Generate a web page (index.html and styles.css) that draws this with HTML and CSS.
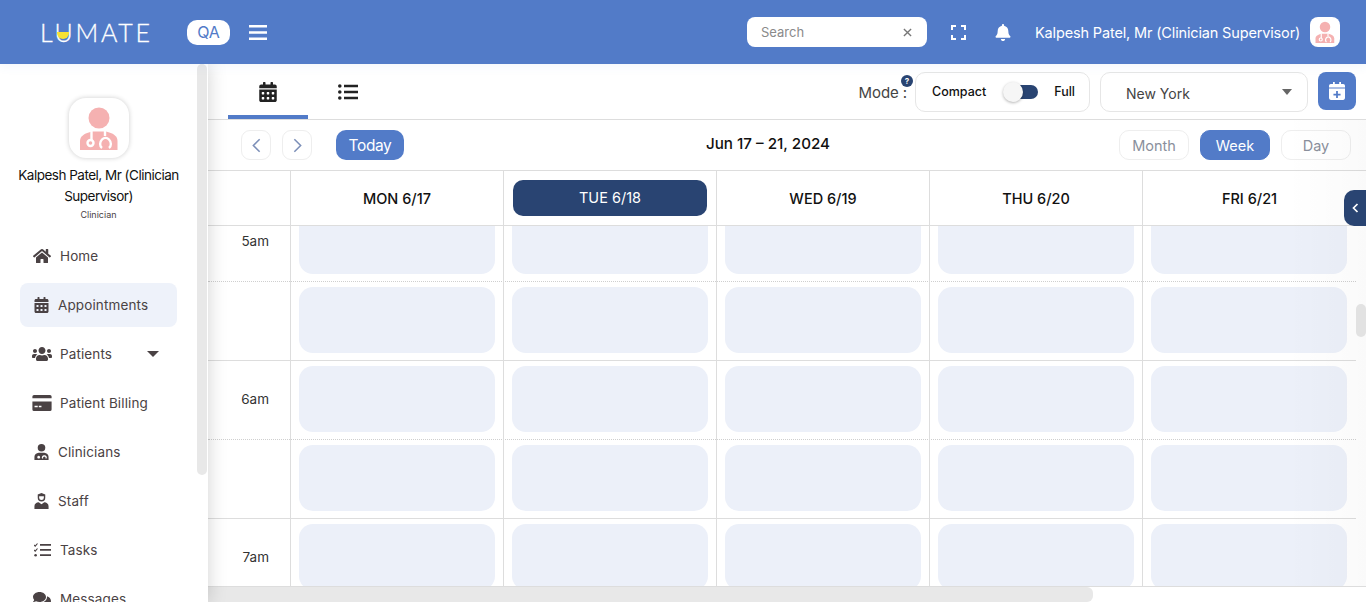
FILE: index.html
```html
<!DOCTYPE html>
<html lang="en">
<head>
<meta charset="utf-8">
<title>Lumate Appointments</title>
<link rel="stylesheet" href="styles.css">
</head>
<body>
<svg class="defs" width="0" height="0" aria-hidden="true">
  <symbol id="doctor" viewBox="0 0 60 60">
    <circle cx="30" cy="20" r="10.5" fill="#f5b1b1"/>
    <path d="M11 52V43c0-5 5-8 12-9.500h14c7 1.500 11.500 4.500 11.500 9.500v9z" fill="#f5b1b1"/>
    <g fill="none" stroke="#fff" stroke-width="2.400">
      <path d="M22.500 33v9"/><circle cx="21.500" cy="45" r="3"/>
      <path d="M36 33v5"/><path d="M33 50c-2.500-2-2.500-6 0-8.500 2-2 5-2 7 0 2.500 2.500 2.500 6.500 0 8.500"/>
    </g>
  </symbol>
  <symbol id="cal" viewBox="0 0 448 512">
    <path d="M0 464c0 26.500 21.500 48 48 48h352c26.500 0 48-21.500 48-48V192H0v272zm320-196c0-6.600 5.400-12 12-12h40c6.600 0 12 5.400 12 12v40c0 6.600-5.400 12-12 12h-40c-6.600 0-12-5.400-12-12v-40zm0 128c0-6.600 5.400-12 12-12h40c6.600 0 12 5.400 12 12v40c0 6.600-5.400 12-12 12h-40c-6.600 0-12-5.400-12-12v-40zM192 268c0-6.600 5.400-12 12-12h40c6.600 0 12 5.400 12 12v40c0 6.600-5.400 12-12 12h-40c-6.600 0-12-5.400-12-12v-40zm0 128c0-6.600 5.400-12 12-12h40c6.600 0 12 5.400 12 12v40c0 6.600-5.400 12-12 12h-40c-6.600 0-12-5.400-12-12v-40zM64 268c0-6.600 5.400-12 12-12h40c6.600 0 12 5.400 12 12v40c0 6.600-5.400 12-12 12H76c-6.600 0-12-5.400-12-12v-40zm0 128c0-6.600 5.400-12 12-12h40c6.600 0 12 5.400 12 12v40c0 6.600-5.400 12-12 12H76c-6.600 0-12-5.400-12-12v-40zM400 64h-48V16c0-8.800-7.200-16-16-16h-32c-8.800 0-16 7.200-16 16v48H160V16c0-8.800-7.200-16-16-16h-32c-8.800 0-16 7.200-16 16v48H48C21.500 64 0 85.500 0 112v48h448v-48c0-26.500-21.500-48-48-48z"/>
  </symbol>
</svg>

<header class="topbar">
  <div class="logo">LUMATE<span class="logo-dot"></span></div>
  <span class="env">QA</span>
  <svg class="burger" viewBox="0 0 18 15"><path d="M0 1.250h18M0 7.500h18M0 13.750h18" stroke="#fff" stroke-width="2.500"/></svg>
  <div class="search"><span>Search</span><svg class="search-x" viewBox="0 0 10 10"><path d="M1 1l8 8M9 1l-8 8" stroke="#777" stroke-width="1.500"/></svg></div>
  <svg class="expand" viewBox="0 0 15 15"><path d="M1 5V1h4M10 1h4v4M14 10v4h-4M5 14H1v-4" fill="none" stroke="#fff" stroke-width="2"/></svg>
  <svg class="bell" viewBox="0 0 448 512"><path fill="#fff" d="M224 512c35.320 0 63.970-28.650 63.970-64H160.030c0 35.350 28.650 64 63.970 64zm215.390-149.710c-19.320-20.760-55.470-51.990-55.470-154.290 0-77.700-54.480-139.900-127.940-155.160V32c0-17.670-14.320-32-31.980-32s-31.980 14.330-31.980 32v20.840C118.560 68.100 64.080 130.300 64.080 208c0 102.300-36.150 133.530-55.470 154.290-6 6.450-8.660 14.160-8.610 21.710.11 16.400 12.980 32 32.100 32h383.800c19.120 0 32-15.600 32.100-32 .05-7.550-2.610-15.270-8.610-21.710z"/></svg>
  <span class="top-name">Kalpesh Patel, Mr (Clinician Supervisor)</span>
  <span class="top-avatar"><svg viewBox="0 0 60 60"><use href="#doctor"/></svg></span>
</header>

<div class="shell">
  <aside class="sidebar">
    <div class="thumb-side"></div>
    <div class="profile">
      <span class="side-avatar"><svg viewBox="0 0 60 60"><use href="#doctor"/></svg></span>
      <div class="side-name">Kalpesh Patel, Mr (Clinician Supervisor)</div>
      <div class="side-role">Clinician</div>
    </div>
    <nav class="menu">
      <a class="item wide"><svg class="ico" viewBox="0 0 576 512"><path d="M280.370 148.260L96 300.110V464a16 16 0 0 0 16 16l112.060-.29a16 16 0 0 0 15.920-16V368a16 16 0 0 1 16-16h64a16 16 0 0 1 16 16v95.640a16 16 0 0 0 16 16.050L464 480a16 16 0 0 0 16-16V300L295.670 148.260a12.190 12.190 0 0 0-15.300 0zM571.600 251.470L488 182.560V44.050a12 12 0 0 0-12-12h-56a12 12 0 0 0-12 12v72.610L318.470 43a48 48 0 0 0-61 0L4.340 251.470a12 12 0 0 0-1.600 16.900l25.500 31A12 12 0 0 0 45.150 301l235.220-193.740a12.190 12.190 0 0 1 15.300 0L530.900 301a12 12 0 0 0 16.900-1.600l25.500-31a12 12 0 0 0-1.700-16.930z"/></svg>Home</a>
      <a class="item active"><svg class="ico narrow"><use href="#cal"/></svg>Appointments</a>
      <a class="item wide"><svg class="ico" viewBox="0 0 640 512"><path d="M96 224c35.300 0 64-28.700 64-64s-28.700-64-64-64-64 28.700-64 64 28.700 64 64 64zm448 0c35.300 0 64-28.700 64-64s-28.700-64-64-64-64 28.700-64 64 28.700 64 64 64zm32 32h-64c-17.600 0-33.500 7.100-45.100 18.600 40.300 22.100 68.900 62 75.100 109.400h66c17.700 0 32-14.300 32-32v-32c0-35.300-28.700-64-64-64zm-256 0c61.900 0 112-50.100 112-112S381.900 32 320 32 208 82.100 208 144s50.100 112 112 112zm76.800 32h-8.300c-20.800 10-43.900 16-68.500 16s-47.600-6-68.500-16h-8.300C179.600 288 128 339.600 128 403.200V432c0 26.500 21.500 48 48 48h288c26.500 0 48-21.500 48-48v-28.800c0-63.600-51.600-115.200-115.200-115.200zm-223.700-13.400C161.500 263.100 145.600 256 128 256H64c-35.300 0-64 28.700-64 64v32c0 17.700 14.300 32 32 32h65.900c6.300-47.400 34.900-87.300 75.200-109.400z"/></svg>Patients<span class="caret-side"></span></a>
      <a class="item wide"><svg class="ico" viewBox="0 0 18 15"><path fill-rule="evenodd" d="M1.500 0h15A1.500 1.500 0 0 1 18 1.500V3H0V1.500A1.500 1.500 0 0 1 1.500 0zM0 6h18v7.500a1.500 1.500 0 0 1-1.500 1.500h-15A1.500 1.500 0 0 1 0 13.500zm2 4v1.500h3V10zm4 0v1.500h2.500V10z"/></svg>Patient Billing</a>
      <a class="item"><svg class="ico narrow" viewBox="0 0 15 17"><circle cx="7.500" cy="4" r="4"/><path fill-rule="evenodd" d="M0 17v-3.500C0 11 2 9.500 4.500 9.200h6C13 9.500 15 11 15 13.500V17zM4.500 12.500a1.500 1.500 0 1 0 .01 0zM10.500 12a2.400 2.400 0 0 0-2.400 3.500h1.200a1.400 1.400 0 1 1 2.400 0h1.200A2.400 2.400 0 0 0 10.500 12z"/></svg>Clinicians</a>
      <a class="item"><svg class="ico narrow" viewBox="0 0 15 17"><path fill-rule="evenodd" d="M3.500 1.500L7.500 0l4 1.500V5a4 4 0 0 1-8 0zM5 3.500V5a2.500 2.500 0 0 0 5 0V3.500z"/><path d="M0 17v-3c0-2.500 2-4 4.500-4.200L7.500 12l3-2.200C13 10 15 11.500 15 14v3z"/></svg>Staff</a>
      <a class="item"><svg class="ico tasks" viewBox="0 0 17 14"><path d="M0 2l1.200 1.200L3.500.5M0 7l1.200 1.200L3.500 5.500" fill="none" stroke="#4a4244" stroke-width="1.100"/><circle cx="1.600" cy="12.200" r="1.300"/><path d="M6 1h11v1.700H6zM6 6h11v1.700H6zM6 11.300h11V13H6z"/></svg>Tasks</a>
      <a class="item wide"><svg class="ico" viewBox="0 0 576 512"><path d="M416 192c0-88.400-93.100-160-208-160S0 103.600 0 192c0 34.300 14.100 65.900 38 92-13.400 30.200-35.500 54.200-35.800 54.500-2.200 2.300-2.800 5.700-1.500 8.700S4.800 352 8 352c36.600 0 66.900-12.300 88.700-25 32.200 15.700 70.300 25 111.300 25 114.900 0 208-71.600 208-160zm122 220c23.900-26 38-57.700 38-92 0-66.900-53.500-124.200-129.300-148.100.9 6.600 1.300 13.300 1.300 20.100 0 105.900-107.700 192-240 192-10.800 0-21.300-.8-31.700-1.900C207.800 439.600 281.800 480 368 480c41 0 79.100-9.200 111.300-25 21.800 12.700 52.100 25 88.700 25 3.200 0 6.100-1.900 7.300-4.800 1.300-2.900.7-6.300-1.500-8.700-.3-.3-22.400-24.200-35.800-54.500z"/></svg>Messages</a>
    </nav>
  </aside>

  <main class="main">
    <div class="toolbar">
      <a class="tab current"><svg class="tab-ico cal-ico"><use href="#cal"/></svg></a>
      <a class="tab"><svg class="tab-ico" viewBox="0 0 20 16"><circle cx="1.800" cy="2" r="1.800"/><circle cx="1.800" cy="8" r="1.800"/><circle cx="1.800" cy="14" r="1.800"/><path d="M6 .8h14v2.400H6zM6 6.800h14v2.400H6zM6 12.800h14v2.400H6z"/></svg></a>
      <div class="tools">
        <span class="mode">Mode :<span class="help">?</span></span>
        <div class="switch-box">
          <span>Compact</span>
          <span class="switch"><span class="knob"></span></span>
          <span>Full</span>
        </div>
        <div class="select"><span>New York</span><span class="caret"></span></div>
        <button class="add"><svg viewBox="0 0 18 20"><path fill="#fff" fill-rule="evenodd" d="M2 2h2.500V0h2v2h5V0h2v2H16a2 2 0 0 1 2 2v2H0V4a2 2 0 0 1 2-2zM0 7.200h18V18a2 2 0 0 1-2 2H2a2 2 0 0 1-2-2zM8 10v3H5v2h3v3h2v-3h3v-2h-3v-3z"/></svg></button>
      </div>
    </div>

    <div class="datebar">
      <div class="left-nav">
        <button class="arrow"><svg viewBox="0 0 10 16"><path d="M8.500 1L1.500 8l7 7" fill="none" stroke="#7c8fb8" stroke-width="1.700"/></svg></button>
        <button class="arrow"><svg viewBox="0 0 10 16"><path d="M1.500 1l7 7-7 7" fill="none" stroke="#7c8fb8" stroke-width="1.700"/></svg></button>
        <button class="today">Today</button>
      </div>
      <div class="range">Jun 17 – 21, 2024</div>
      <div class="views">
        <button class="view">Month</button>
        <button class="view on">Week</button>
        <button class="view">Day</button>
      </div>
    </div>

    <div class="days">
      <div class="time-head"></div>
      <div class="day">MON 6/17</div>
      <div class="day"><span class="today-pill">TUE 6/18</span></div>
      <div class="day">WED 6/19</div>
      <div class="day">THU 6/20</div>
      <div class="day">FRI 6/21</div>
    </div>

    <div class="body">
      <div class="rows">
        <div class="row half"><div class="time">5am</div><div class="cell"><i></i></div><div class="cell"><i></i></div><div class="cell"><i></i></div><div class="cell"><i></i></div><div class="cell"><i></i></div></div>
        <div class="row"><div class="time"></div><div class="cell"><i></i></div><div class="cell"><i></i></div><div class="cell"><i></i></div><div class="cell"><i></i></div><div class="cell"><i></i></div></div>
        <div class="row half"><div class="time">6am</div><div class="cell"><i></i></div><div class="cell"><i></i></div><div class="cell"><i></i></div><div class="cell"><i></i></div><div class="cell"><i></i></div></div>
        <div class="row"><div class="time"></div><div class="cell"><i></i></div><div class="cell"><i></i></div><div class="cell"><i></i></div><div class="cell"><i></i></div><div class="cell"><i></i></div></div>
        <div class="row half"><div class="time">7am</div><div class="cell"><i></i></div><div class="cell"><i></i></div><div class="cell"><i></i></div><div class="cell"><i></i></div><div class="cell"><i></i></div></div>
      </div>
    </div>

    <div class="hbar"><div class="hthumb"></div></div>
    <div class="fade"></div>
    <div class="vthumb"></div>
    <button class="collapse"><svg viewBox="0 0 7 10"><path d="M5.500 1L1.500 5l4 4" fill="none" stroke="#fff" stroke-width="1.700"/></svg></button>
  </main>
</div>
</body>
</html>
```
FILE: styles.css
```css
* { box-sizing: border-box; }
html, body { margin: 0; height: 602px; overflow: hidden; }
body {
  font-family: Inter, "Open Sans", sans-serif;
  color: #111;
  background: #fff;
  display: flex;
  flex-direction: column;
}
.defs { position: absolute; }
button { font-family: inherit; cursor: pointer; }

/* top bar */
.topbar {
  height: 64px;
  flex: none;
  background: #527bc8;
  display: flex;
  align-items: center;
  padding-left: 40px;
  position: relative;
  z-index: 3;
  box-shadow: 0 2px 10px rgba(82, 123, 200, .08);
}
.logo {
  position: relative;
  width: 110px;
  font-family: Lato, sans-serif;
  font-size: 25px;
  font-weight: 300;
  letter-spacing: 2.750px;
  color: #fff;
  line-height: 24px;
  -webkit-text-stroke: .3px #fff;
  white-space: nowrap;
}
.logo-dot {
  position: absolute;
  left: 17px;
  top: 12px;
  width: 12px;
  height: 7px;
  background: #f6e233;
  border-radius: 0 0 7px 7px;
}
.env {
  margin-left: 37px;
  width: 43px;
  height: 25px;
  background: #fff;
  border-radius: 10px;
  color: #527bc8;
  font-size: 16px;
  letter-spacing: -.2px;
  line-height: 25px;
  text-align: center;
}
.burger { margin-left: 19px; width: 18px; height: 15px; }
.search {
  margin-left: 480px;
  width: 180px;
  height: 30px;
  background: #fff;
  border-radius: 8px;
  display: flex;
  align-items: center;
  justify-content: space-between;
  padding: 0 15px 0 14px;
  font-size: 13px;
  color: #8a8a8a;
}
.search-x { width: 9px; height: 9px; }
.expand { margin-left: 24px; width: 15px; height: 15px; }
.bell { margin-left: 29px; width: 16px; height: 17px; }
.top-name {
  margin-left: 24px;
  width: 265px;
  font-size: 14.500px;
  letter-spacing: -.15px;
  color: #fff;
  white-space: nowrap;
}
.top-avatar {
  margin-left: 10px;
  width: 30px;
  height: 30px;
  border-radius: 8px;
  background: #fff;
  display: block;
}
.top-avatar svg { width: 30px; height: 30px; display: block; }

/* shell */
.shell { flex: 1; display: flex; min-height: 0; }

/* sidebar */
.sidebar {
  width: 208px;
  flex: none;
  background: #fff;
  position: relative;
  z-index: 2;
  box-shadow: 0 0 18px rgba(0, 0, 0, .18);
  overflow: hidden;
}
.thumb-side {
  position: absolute;
  left: 197px;
  top: 0;
  width: 10px;
  height: 411px;
  background: #e8e8e8;
  border-radius: 5px;
}
.profile {
  width: 197px;
  padding-top: 34px;
  display: flex;
  flex-direction: column;
  align-items: center;
  text-align: center;
}
.side-avatar {
  width: 60px;
  height: 60px;
  border-radius: 17px;
  background: #fff;
  box-shadow: 0 0 5px rgba(0, 0, 0, .2);
  display: block;
}
.side-avatar svg { width: 60px; height: 60px; display: block; }
.side-name {
  width: 176px;
  margin-top: 7px;
  font-size: 13.500px;
  letter-spacing: -.5px;
  line-height: 21px;
  color: #111;
}
.side-role { margin-top: 2px; font-size: 9px; line-height: 12px; color: #4a4244; }
.menu {
  margin-top: 13px;
  padding: 0 31px 0 20px;
  display: flex;
  flex-direction: column;
  gap: 5px;
}
.item {
  height: 44px;
  flex: none;
  display: flex;
  align-items: center;
  padding-left: 13px;
  font-size: 13.500px;
  letter-spacing: .12px;
  color: #4a4244;
  border-radius: 8px;
  position: relative;
}
.item.active { background: #eef2fa; }
.ico { width: 18px; height: 16px; margin-right: 9px; fill: #4a4244; flex: none; }
.ico.narrow { width: 15px; height: 16px; margin-left: 1px; margin-right: 9px; }
.ico.tasks { width: 17px; height: 14px; margin-left: 1px; margin-right: 9px; }
.wide .ico { width: 20px; margin-left: -1px; margin-right: 8px; }
.caret-side {
  position: absolute;
  right: 18px;
  top: 19px;
  border: 6px solid transparent;
  border-top-color: #4a4244;
  border-bottom: 0;
}

/* main */
.main { flex: 1; min-width: 0; display: flex; flex-direction: column; position: relative; }
.toolbar {
  height: 56px;
  flex: none;
  border-bottom: 1px solid #ddd;
  display: flex;
  padding-left: 20px;
  position: relative;
}
.tab {
  width: 80px;
  height: 55px;
  display: flex;
  align-items: flex-start;
  justify-content: center;
  padding-top: 20px;
}
.tab.current { border-bottom: 4px solid #527bc8; }
.tab-ico { width: 20px; height: 16px; fill: #222; }
.cal-ico { width: 18px; height: 20px; margin-top: -2px; }
.tools {
  margin-left: auto;
  padding: 8px 10px 0 0;
  display: flex;
  align-items: flex-start;
}
.mode {
  position: relative;
  margin: 11px 8px 0 0;
  font-size: 15px;
  letter-spacing: -.1px;
  line-height: 20px;
  color: #444;
}
.help {
  position: absolute;
  right: -6px;
  top: -8px;
  width: 12px;
  height: 12px;
  border-radius: 50%;
  background: #294472;
  color: #fff;
  font-size: 8px;
  font-weight: 700;
  line-height: 12px;
  text-align: center;
}
.switch-box {
  width: 175px;
  height: 40px;
  border: 1px solid #e6e6e6;
  border-radius: 10px;
  display: flex;
  align-items: center;
  justify-content: space-between;
  padding: 0 14px 2px 16px;
  font-size: 12.500px;
  font-weight: 500;
  color: #111;
}
.switch {
  position: relative;
  width: 29px;
  height: 14px;
  margin: 2px 0 0 6px;
  background: #294472;
  border-radius: 7px;
}
.knob {
  position: absolute;
  left: -6px;
  top: -3px;
  width: 20px;
  height: 20px;
  border-radius: 50%;
  background: #f6f6f6;
  box-shadow: 0 1px 3px rgba(0, 0, 0, .3);
}
.select {
  margin-left: 10px;
  width: 208px;
  height: 40px;
  border: 1px solid #e6e6e6;
  border-radius: 10px;
  display: flex;
  align-items: center;
  justify-content: space-between;
  padding: 3px 15px 0 25px;
  font-size: 14px;
  color: #444;
}
.caret {
  margin-top: -4px;
  border: 5.500px solid transparent;
  border-top: 6px solid #666;
  border-bottom: 0;
}
.add {
  margin-left: 10px;
  width: 38px;
  height: 38px;
  background: #527bc8;
  border: 0;
  border-radius: 8px;
  padding: 0;
  display: flex;
  align-items: center;
  justify-content: center;
}
.add svg { width: 16px; height: 20px; }

/* date row */
.datebar {
  height: 51px;
  flex: none;
  border-bottom: 1px solid #ddd;
  display: grid;
  grid-template-columns: 1fr auto 1fr;
  align-items: start;
  padding: 10px 15px 0 33px;
}
.left-nav { display: flex; }
.arrow {
  width: 30px;
  height: 30px;
  margin-right: 11px;
  background: #fff;
  border: 1px solid #eee;
  border-radius: 9px;
  padding: 0;
  display: flex;
  align-items: center;
  justify-content: center;
}
.arrow svg { width: 9px; height: 15px; }
.today {
  margin-left: 13px;
  width: 68px;
  height: 30px;
  background: #527bc8;
  color: #fff;
  border: 0;
  border-radius: 10px;
  font-size: 15.500px;
  letter-spacing: -.4px;
  padding: 0;
}
.range {
  font-size: 15.200px;
  font-weight: 500;
  line-height: 28px;
  color: #111;
  transform: translateX(-28px);
}
.views { display: flex; justify-content: flex-end; gap: 11px; }
.view {
  width: 70px;
  height: 30px;
  background: #fff;
  border: 1px solid #eee;
  border-radius: 10px;
  color: #8a8f9c;
  font-size: 14.500px;
  padding: 0;
}
.view.on { background: #527bc8; border-color: #527bc8; color: #fff; }

/* calendar */
.days {
  height: 55px;
  flex: none;
  border-bottom: 1px solid #ddd;
  display: grid;
  grid-template-columns: 83px repeat(5, 213px);
}
.time-head { border-right: 1px solid #ddd; }
.day {
  border-right: 1px solid #ddd;
  display: flex;
  align-items: center;
  justify-content: center;
  font-size: 14.500px;
  font-weight: 500;
  color: #111;
}
.day:last-child { border-right: 0; }
.today-pill {
  width: 194px;
  height: 36px;
  background: #294472;
  border-radius: 10px;
  color: #fff;
  font-weight: 400;
  line-height: 36px;
  text-align: center;
}
.body { flex: 1; min-height: 0; overflow: hidden; }
.rows { margin-top: -23px; }
.row {
  height: 79px;
  width: 1148px;
  border-bottom: 1px dotted #cfcfcf;
  display: grid;
  grid-template-columns: 83px repeat(5, 213px);
}
.row:nth-child(even) { border-bottom: 1px solid #ddd; }
.time {
  border-right: 1px solid #ddd;
  font-size: 13.500px;
  color: #333;
  text-align: right;
  padding: 29px 21px 0 0;
  line-height: 18px;
  height: 79px;
  overflow: visible;
}
.cell { border-right: 1px solid #ddd; padding: 5px 8px 0 8px; height: 79px; }
.cell:last-child { border-right: 0; padding-right: 9px; }
.cell i { display: block; height: 66px; background: #ecf0f9; border-radius: 14px; }

/* overlays */
.hbar {
  height: 16px;
  flex: none;
  background: #fff;
  border-top: 1px solid #ddd;
  position: relative;
}
.hthumb {
  width: 885px;
  height: 15px;
  background: #e8e8e8;
  border-radius: 0 6px 6px 0;
}
.fade {
  position: absolute;
  right: 0;
  top: 56px;
  bottom: 16px;
  width: 80px;
  background: linear-gradient(to right, rgba(0, 0, 0, 0), rgba(0, 0, 0, .02));
  pointer-events: none;
}
.vthumb {
  position: absolute;
  right: 0;
  top: 240px;
  width: 10px;
  height: 33px;
  background: #e2e2e2;
  border-radius: 5px;
}
.collapse {
  position: absolute;
  right: 0;
  top: 126px;
  width: 22px;
  height: 36px;
  background: #294472;
  border: 0;
  border-radius: 10px 0 0 10px;
  padding: 0;
  display: flex;
  align-items: center;
  justify-content: center;
}
.collapse svg { width: 7px; height: 10px; }
```
